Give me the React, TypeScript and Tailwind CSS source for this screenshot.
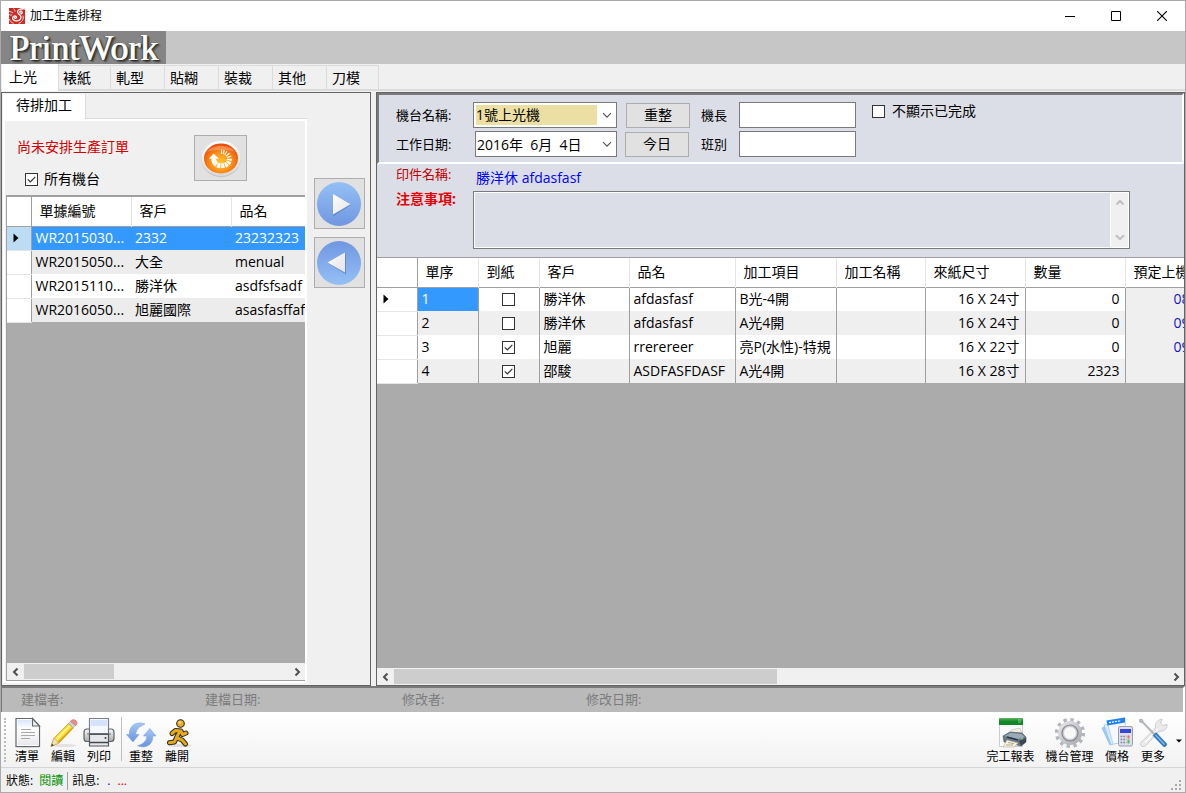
import React, { useState } from "react";

const TABS = ["上光", "裱紙", "軋型", "貼糊", "裝裁", "其他", "刀模"];

const PENDING = [
  ["WR2015030...", "2332", "23232323"],
  ["WR2015050...", "大全", "menual"],
  ["WR2015110...", "勝洋休", "asdfsfsadf"],
  ["WR2016050...", "旭麗國際", "asasfasffaf"],
];

const JOBS = [
  { no: "1", arrived: false, client: "勝洋休", name: "afdasfasf", item: "B光-4開", size: "16 X 24寸", qty: "0", due: "08" },
  { no: "2", arrived: false, client: "勝洋休", name: "afdasfasf", item: "A光4開", size: "16 X 24寸", qty: "0", due: "09" },
  { no: "3", arrived: true, client: "旭麗", name: "rrerereer", item: "亮P(水性)-特規", size: "16 X 22寸", qty: "0", due: "09" },
  { no: "4", arrived: true, client: "邵駿", name: "ASDFASFDASF", item: "A光4開", size: "16 X 28寸", qty: "2323", due: "" },
];

function CheckBox({ id, label, checked }: { id?: string; label?: string; checked: boolean }) {
  return (
    <span className="inline-grid size-[13px] shrink-0 place-items-center">
      <input
        id={id}
        aria-label={label}
        type="checkbox"
        defaultChecked={checked}
        className="peer col-start-1 row-start-1 size-[13px] appearance-none border border-[#333] bg-white"
      />
      <svg viewBox="0 0 13 13" className="pointer-events-none invisible col-start-1 row-start-1 size-[13px] peer-checked:visible">
        <path d="M2.8 6.4 5.3 9 10.3 3.8" fill="none" stroke="#333" strokeWidth="1.2" />
      </svg>
    </span>
  );
}

function Chevron({ dir, color = "#505050", bold = true }: { dir: "left" | "right" | "up" | "down"; color?: string; bold?: boolean }) {
  const paths = {
    left: "M7.5 2.5 4 6l3.5 3.5",
    right: "M4.5 2.5 8 6 4.5 9.5",
    up: "M2.5 7.5 6 4l3.5 3.5",
    down: "M2 4.2 6 8.2l4-4",
  };
  return (
    <svg viewBox="0 0 12 12" className="size-3 shrink-0">
      <path d={paths[dir]} fill="none" stroke={color} strokeWidth={bold ? 2 : 1.1} />
    </svg>
  );
}

function RowMarker() {
  return (
    <svg viewBox="0 0 6 10" className="ml-[6px] h-[10px] w-[6px]">
      <path d="M0.5 0.5v9L5.5 5z" fill="#000" />
    </svg>
  );
}

function HScroll({ thumb }: { thumb: string }) {
  return (
    <div className="flex h-[17px] shrink-0 items-stretch bg-[#f0f0f0]">
      <button aria-label="向左捲動" className="flex w-[17px] items-center justify-center"><Chevron dir="left" /></button>
      <div className="flex flex-1 py-px">
        <div className={"bg-[#cdcdcd] " + thumb} />
      </div>
      <button aria-label="向右捲動" className="flex w-[17px] items-center justify-center"><Chevron dir="right" /></button>
    </div>
  );
}

function AppIcon() {
  return (
    <svg viewBox="0 0 16 16" className="size-4">
      <rect width="16" height="16" fill="#cf2a22" />
      <path d="M15.500 .8C11 .5 8.200 1.800 8.600 4.200S12 6.500 12 9.200 9.500 13.200 6.500 12.800 3 10 4.300 8.700s3.300-.6 3 .8-1.700.8-1.700.2M11.200 4.800c-.8-1 .3-2.200 1.300-1.600s.8 2.300-.5 2.600" fill="none" stroke="#fff" strokeWidth="1.300" strokeLinecap="round" />
      <path d="M14 8c1 3-.5 6-4 7.200M0 3.500c2-.3 2.500 1.300 3.800 1.100M4.800 1c1.200.6 1.200 1.500 1.200 2.200M.5 6.800c1 .8 2 .5 2.600-.2M.5 11.500c.5 1.800 2 3.200 3.700 3.700" fill="none" stroke="#fff" strokeWidth=".8" strokeLinecap="round" />
    </svg>
  );
}

function OrangeRefresh() {
  return (
    <svg viewBox="0 0 42 40" className="h-10 w-[42px]">
      <defs>
        <radialGradient id="og" cx="50%" cy="62%" r="60%">
          <stop offset="0" stopColor="#ffc62c" />
          <stop offset=".5" stopColor="#ff931a" />
          <stop offset="1" stopColor="#e94c06" />
        </radialGradient>
        <linearGradient id="ring" x1="0" y1="0" x2="0" y2="1">
          <stop offset="0" stopColor="#fff" />
          <stop offset="1" stopColor="#d8d8d8" />
        </linearGradient>
      </defs>
      <ellipse cx="21" cy="21.500" rx="19.500" ry="17.500" fill="#c2c2c2" />
      <ellipse cx="21" cy="20.500" rx="19.500" ry="17.500" fill="url(#ring)" />
      <ellipse cx="21" cy="20.500" rx="17" ry="15" fill="url(#og)" />
      <path d="M7 14c4-8 24-8 28 0-7-3-21-3-28 0z" fill="#fff" opacity=".25" />
      <path d="M13.500 20.500c.5 5 3.500 7.300 8 7.300 5 0 8-3 8-7" fill="none" stroke="#fff" strokeWidth="5" strokeDasharray="7 .8 3.200 .8 3 .8 2.600 .8 2.400 .9" />
      <path d="M9 20.800 13.500 15.500l5.500 5.300z" fill="#fff" />
      <path d="M21.500 11.500v4.500M24.200 12l-1 4.200M27 13.200l-2.300 3.600M29.500 15.300l-3.500 2.800M31.300 18l-4.300 1.500" stroke="#fff" strokeWidth="1.100" />
    </svg>
  );
}

function BlueArrow({ flip }: { flip?: boolean }) {
  const id = flip ? "blueL" : "blueR";
  return (
    <svg viewBox="0 0 46 46" className="size-[46px]">
      <defs>
        <linearGradient id={id} x1="0" y1={flip ? "1" : "0"} x2="0" y2={flip ? "0" : "1"}>
          <stop offset="0" stopColor="#94c0f5" />
          <stop offset="1" stopColor="#7097e0" />
        </linearGradient>
        <linearGradient id={id + "w"} x1="0" y1="0" x2="1" y2="1">
          <stop offset="0" stopColor="#fff" />
          <stop offset="1" stopColor="#e2e2e4" />
        </linearGradient>
      </defs>
      <circle cx="23" cy="23" r="22" fill={"url(#" + id + ")"} />
      {flip ? (
        <>
          <path d="M30 13v21.500L12 23z" fill="#5575bd" opacity=".6" />
          <path d="M29 12.500v20L11.500 22.500z" fill={"url(#" + id + "w)"} />
        </>
      ) : (
        <>
          <path d="M17 14v21.500L35 24z" fill="#5575bd" opacity=".6" />
          <path d="M17 13v20.500L34.500 23.200z" fill={"url(#" + id + "w)"} />
        </>
      )}
    </svg>
  );
}

function DocIcon() {
  return (
    <svg viewBox="0 0 32 32" className="size-8">
      <defs>
        <linearGradient id="doc" x1="0" y1="0" x2="0" y2="1">
          <stop offset="0" stopColor="#d9e6fb" />
          <stop offset=".35" stopColor="#fff" />
          <stop offset="1" stopColor="#e9e9ec" />
        </linearGradient>
      </defs>
      <ellipse cx="16.500" cy="30" rx="13" ry="1.200" fill="#d4d4d4" />
      <path d="M5 1.500h16.500l7 7.500v20.500H5z" fill="#fff" stroke="#62666d" strokeWidth="1.200" />
      <path d="M6.500 3h14v7H27v18H6.500z" fill="url(#doc)" />
      <path d="M21.500 1.500V9h7z" fill="#eef0f4" stroke="#62666d" strokeWidth="1.100" />
      <path d="M10 12.500h10M10 15.500h14M10 18.500h14M10 21.500h9" stroke="#aaa" strokeWidth="1.100" />
    </svg>
  );
}

function PencilIcon() {
  return (
    <svg viewBox="0 0 32 32" className="size-8">
      <ellipse cx="17" cy="28.500" rx="12" ry="1.600" fill="#e2e2e2" />
      <path d="M4 29.500 6.700 21.500 21.500 6.500l4.800 4.300L12 26z" fill="#f8d42e" stroke="#c9a012" strokeWidth=".8" />
      <path d="m8.200 21.800 14-14 1.700 1.600-14 14.300z" fill="#fff27a" />
      <path d="m10.800 25 14-14 1 .8-14 14z" fill="#d99d12" />
      <path d="M4 29.500 6.700 21.500l2.700 1.300.6 1.900 2 1.300z" fill="#f3dfb5" stroke="#c9a860" strokeWidth=".6" />
      <path d="m4 29.500 1-3 1.900 1.900z" fill="#444" />
      <path d="M21.500 6.500 24 3.800l4.900 4.500-2.600 2.500z" fill="#d4d4d4" stroke="#999" strokeWidth=".6" />
      <path d="M23.500 4.300c1.500-1.800 3.600-2.300 5.300-.7s1.500 3.700-.2 5z" fill="#ee8a88" stroke="#c36464" strokeWidth=".6" />
    </svg>
  );
}

function PrinterIcon() {
  return (
    <svg viewBox="0 0 32 32" className="size-8">
      <defs>
        <linearGradient id="prn" x1="0" y1="0" x2="0" y2="1">
          <stop offset="0" stopColor="#fafafa" />
          <stop offset="1" stopColor="#a9abb0" />
        </linearGradient>
      </defs>
      <path d="M4 12h24c2 0 3 1.500 3 3.500v6c0 2-1 3-3 3H4c-2 0-3-1-3-3v-6C1 13.500 2 12 4 12z" fill="url(#prn)" stroke="#5d6066" strokeWidth="1.200" />
      <path d="M6.500 1.500h19v15h-19z" fill="#f5f8fe" stroke="#7c8087" strokeWidth="1.200" />
      <path d="M8 3h16v6H8z" fill="#d5e2fa" />
      <path d="M6.500 12v4.500h19V12M4 17h24" fill="none" stroke="#696c72" />
      <path d="M6.500 17.500h19V29h-19z" fill="#e7e8ea" stroke="#54575c" strokeWidth="1.200" />
      <path d="M7 25.500h18" stroke="#44474c" strokeWidth="1.500" />
      <circle cx="22.500" cy="21" r="1" fill="#444" />
    </svg>
  );
}

function SyncIcon() {
  return (
    <svg viewBox="0 0 32 32" className="size-8">
      <defs>
        <linearGradient id="sync" x1="0" y1="0" x2="0" y2="1">
          <stop offset="0" stopColor="#a4c8f5" />
          <stop offset="1" stopColor="#6a94de" />
        </linearGradient>
      </defs>
      <path d="M20 7C11 3.500 4 9 4.300 17.500H1.500L8 25l6-7.500h-3.200C11 12.500 14 9.500 20 7z" fill="url(#sync)" stroke="#7ca4df" strokeWidth=".6" />
      <path d="M12.500 28.800c9 3.500 15.700-1.500 15.200-9.800H31l-6.200-7.500L18.500 19h3.300c0 5-3.300 8-9.300 9.800z" fill="url(#sync)" stroke="#7ca4df" strokeWidth=".6" />
    </svg>
  );
}

function RunnerIcon() {
  return (
    <svg viewBox="0 0 32 32" className="size-8">
      <ellipse cx="19" cy="28.500" rx="12" ry="1.600" fill="#dedede" />
      <g strokeLinecap="round" strokeLinejoin="round" fill="none">
        <path d="m11 16.500 3.500-3 5.500.5 1.500 3.500 3.500-1.500M18.500 15l-3 5.500-2 4.500-5 .8M16 21l5 2 3.500 4" strokeWidth="5" stroke="#2d2a20" />
        <path d="m11 16.500 3.500-3 5.500.5 1.500 3.500 3.500-1.500M18.500 15l-3 5.500-2 4.500-5 .8M16 21l5 2 3.500 4" strokeWidth="3" stroke="#e6a81e" />
      </g>
      <circle cx="19.500" cy="6.500" r="3.800" fill="#edae27" stroke="#2d2a20" strokeWidth="1.100" />
      <circle cx="18.700" cy="5.500" r="1.300" fill="#ffe07c" />
    </svg>
  );
}

function ReportIcon() {
  return (
    <svg viewBox="0 0 32 32" className="size-8">
      <path d="M4.500 2h23v27.500h-23z" fill="#fafafa" stroke="#ccc" />
      <path d="M4 1.500h24v6.500H4z" fill="#12872a" />
      <path d="M4 1.500h24v2H4z" fill="#38a53f" />
      <path d="M23 3h3M23 5h3" stroke="#80d080" />
      <path d="m16 13 9-2 2 6-10 2z" fill="#f4efdf" stroke="#bbb" strokeWidth=".6" />
      <path d="m8 19 7-4 12 1 4 4v5l-5 4-17-4z" fill="#697887" stroke="#4b5662" strokeWidth=".6" />
      <path d="m9.500 19 6-3 11 1 3 3-6 2z" fill="#9cabb9" />
      <path d="m12 20 11 3" stroke="#334" strokeWidth="1.500" />
      <path d="m24 24 7-3v4l-5 4z" fill="#3c4651" />
      <path d="M26 21.500h2" stroke="#70cd60" strokeWidth="1.500" />
      <path d="m12 23 11 3-4 4H8z" fill="#f8f1dd" stroke="#b5b09c" strokeWidth=".6" />
      <path d="M11 28h7M13 25.500l6 1.200" stroke="#aa9" />
    </svg>
  );
}

function GearIcon() {
  return (
    <svg viewBox="0 0 32 32" className="size-8">
      <defs>
        <linearGradient id="gear" x1="0" y1="0" x2="1" y2="1">
          <stop offset="0" stopColor="#e4e4e8" />
          <stop offset="1" stopColor="#adaeb6" />
        </linearGradient>
      </defs>
      <circle cx="16" cy="16" r="13" fill="none" stroke="#b4b5bb" strokeWidth="4.200" strokeDasharray="3.200 3.607" />
      <circle cx="16" cy="16" r="9.200" fill="none" stroke="url(#gear)" strokeWidth="5.600" />
      <circle cx="16" cy="16" r="8" fill="none" stroke="#85868e" strokeWidth="1.200" />
      <circle cx="16" cy="16" r="6.500" fill="#f8f8f8" stroke="#c8c9ce" />
    </svg>
  );
}

function PriceIcon() {
  return (
    <svg viewBox="0 0 32 32" className="size-8">
      <path d="m1 11 10-4 5 18-7 3z" fill="#9fcdf5" stroke="#6daeeb" strokeWidth=".6" />
      <path d="m3 8 13-3 3 20-9 3z" fill="#d7eafc" stroke="#8ebdec" strokeWidth=".6" />
      <path d="m6 4 18-3 1 24-13 2z" fill="#f5f9ff" stroke="#9ebde8" strokeWidth=".6" />
      <path d="m5.500 3.500 18.500-3v5l-17.500 3z" fill="#2080ec" />
      <path d="m8 5.700 12-2" stroke="#fff" strokeWidth="1.200" strokeDasharray="2 1" />
      <rect x="17.500" y="9.500" width="14" height="19.500" rx="1.500" fill="#dedfea" stroke="#9a9db0" />
      <rect x="19" y="12" width="11" height="4" fill="#3445dc" />
      <path d="M19.500 19.500h6M19.500 22.500h6M19.500 25.500h6" stroke="#8588a0" strokeWidth="1.700" strokeDasharray="1.800 1" />
      <path d="M27.500 18.500v3" stroke="#ef6767" strokeWidth="2" />
      <path d="M27.500 22.500v4" stroke="#55bb65" strokeWidth="2" />
    </svg>
  );
}

function ToolsIcon() {
  return (
    <svg viewBox="0 0 32 32" className="size-8">
      <path d="M4 28.500c-2-2 0-3.500 2-5L18.500 11c-1-4 1.500-8 6.500-9l-1.500 4 2 2.500 4.500-1c.5 5-4 7.500-8 6.500L9 28.500c-2 1.500-3.500 1.500-5 0z" fill="#eaeaeb" stroke="#c0c1c3" strokeWidth=".8" />
      <path d="M8 25.500 21 12.500" stroke="#fff" strokeWidth="1.200" />
      <path d="M2.500 2.500 5 2l1.500 3 11 11.500-1 1L5.500 6 2.500 5z" fill="#b5b9bd" stroke="#999da2" strokeWidth=".5" />
      <path d="m16 18.500 3-3L29.500 26.500c1 1.500-1.500 4-3 3z" fill="#2d78be" stroke="#3a78b0" strokeWidth=".6" />
      <path d="m18.500 18 9 9.500" stroke="#80b9ea" strokeWidth="1.500" />
    </svg>
  );
}

function ToolButton({ label, icon, wide }: { label: string; icon: React.ReactNode; wide?: boolean }) {
  return (
    <button className={(wide ? "w-[59px]" : "w-9") + " flex flex-col items-center whitespace-nowrap text-[12px] leading-[15px]"}>
      {icon}
      {label}
    </button>
  );
}

function FormButton({ children }: { children: React.ReactNode }) {
  return <button className="h-[25px] w-16 border border-[#adadad] bg-[#e1e1e1] text-[14px] leading-5">{children}</button>;
}

function PendingPanel() {
  return (
    <section className="flex w-[370px] shrink-0 border border-[#646464] bg-[#f0f0f0] pt-px pb-[2px]">
      <div className="flex w-[305px] flex-col pl-px">
        <div className="flex h-[25px] shrink-0 items-stretch" role="tablist">
          <button role="tab" aria-selected="true" className="w-[83px] border-r border-[#dadada] bg-white pb-1 text-center text-[14px] leading-5">
            待排加工
          </button>
          <div className="flex-1 border-b border-[#dadada]" />
        </div>
        <div className="flex min-h-0 flex-1 flex-col border-2 border-white pl-px">
          <div className="flex h-[74px] shrink-0 justify-between pr-[58px] pl-[11px]">
            <div className="flex flex-col gap-3 pt-4">
              <h2 className="text-[14px] leading-5 text-[#d00000]">尚未安排生產訂單</h2>
              <label htmlFor="all" className="flex items-center gap-[6px] pl-[8px] text-[14px] leading-5">
                <CheckBox id="all" checked />
                所有機台
              </label>
            </div>
            <button aria-label="重新整理" className="mt-[14px] flex h-[46px] w-[53px] items-center justify-center border border-[#adadad] bg-[#e1e1e1]">
              <OrangeRefresh />
            </button>
          </div>
          <div className="flex min-h-0 flex-1 flex-col border-2 border-r-0 border-b border-l border-[#a0a0a0] bg-[#ababab]">
            <div className="min-h-0 flex-1 overflow-hidden">
              <table className="w-full table-fixed border-collapse text-[14px]">
                <colgroup>
                  <col className="w-6" />
                  <col className="w-[100px]" />
                  <col className="w-[100px]" />
                  <col />
                </colgroup>
                <thead>
                  <tr className="h-[29px] border-b border-[#a0a0a0] bg-white text-left">
                    <td className="border-r border-[#a0a0a0]" />
                    {["單據編號", "客戶", "品名"].map((h) => (
                      <th key={h} className="border-r border-[#e5e5e5] pb-[2px] pl-2 font-normal last:border-r-0">{h}</th>
                    ))}
                  </tr>
                </thead>
                <tbody>
                  {PENDING.map((row, i) => (
                    <tr key={row[0]} className={"h-6 " + (i === 0 ? "bg-[#3399ff] text-white" : i % 2 ? "bg-[#ececec]" : "bg-white")}>
                      <td className={"border-r border-b border-r-[#a0a0a0] border-b-[#e5e5e5] " + (i === 0 ? "bg-[#bcdcf4]" : "bg-white")}>
                        {i === 0 && <RowMarker />}
                      </td>
                      {row.map((c) => (
                        <td key={c} className="overflow-hidden pl-1 leading-5 whitespace-nowrap">{c}</td>
                      ))}
                    </tr>
                  ))}
                </tbody>
              </table>
            </div>
            <HScroll thumb="w-[34%]" />
          </div>
        </div>
      </div>
      <div className="flex flex-1 flex-col items-center gap-2 pt-[84px] pl-px">
        <button aria-label="加入排程" className="flex size-[51px] items-center justify-center border border-[#adadad] bg-[#e1e1e1]"><BlueArrow /></button>
        <button aria-label="移出排程" className="flex size-[51px] items-center justify-center border border-[#adadad] bg-[#e1e1e1]"><BlueArrow flip /></button>
      </div>
    </section>
  );
}

function JobForm() {
  return (
    <div className="shrink-0 bg-[#dcdee7]">
      <div className="grid h-[71px] grid-cols-[77px_144px_81px_auto_1fr] content-start items-center gap-y-[3px] border-2 border-t-[#7a7a7a] border-r-white border-b-white border-l-[#7a7a7a] pt-[7px] pl-[17px] text-[14px] leading-5">
        <label htmlFor="machine" className="text-[13px]">機台名稱:</label>
        <div className="flex h-[26px] items-center border border-[#7a7a7a] bg-white p-[2px] pr-[3px]">
          <select id="machine" className="h-full flex-1 appearance-none bg-[#ecdfa3] outline-none">
            <option>1號上光機</option>
          </select>
          <span className="pointer-events-none flex pl-[4px]"><Chevron dir="down" bold={false} /></span>
        </div>
        <div className="pl-[9px]"><FormButton>重整</FormButton></div>
        <div className="flex items-center">
          <label htmlFor="leader" className="w-[41px] pl-[3px] text-[13px]">機長</label>
          <input id="leader" className="h-[26px] w-[117px] border border-[#7a7a7a] bg-white px-1" />
        </div>
        <label htmlFor="hide" className="flex h-[26px] items-center gap-[7px] pb-[8px] pl-4">
          <CheckBox id="hide" checked={false} />
          不顯示已完成
        </label>
        <label htmlFor="date" className="text-[13px]">工作日期:</label>
        <div className="ml-[2px] flex h-[26px] items-center border border-[#7a7a7a] bg-white pr-[3px]">
          <input id="date" defaultValue={"2016年\u00a0 6月\u00a0 4日"} className="h-full min-w-0 flex-1 pl-px outline-none" />
          <Chevron dir="down" bold={false} />
        </div>
        <div className="pl-[8px]"><FormButton>今日</FormButton></div>
        <div className="flex items-center">
          <label htmlFor="shift" className="w-[41px] pl-[3px] text-[13px]">班別</label>
          <input id="shift" className="h-[26px] w-[117px] border border-[#7a7a7a] bg-white px-1" />
        </div>
      </div>
      <div className="grid h-[93px] grid-cols-[77px_1fr] content-start gap-y-[3px] pr-[54px] pl-[19px] leading-5">
        <span className="text-[13px] text-[#c00000]">印件名稱:</span>
        <span className="pt-1 pl-[3px] text-[14px] text-[#0000ff]">勝洋休 afdasfasf</span>
        <label htmlFor="notes" className="text-[14px] leading-4 font-bold text-[#e60000]">注意事項:</label>
        <div className="flex h-[58px] border border-[#7a7a7a] bg-white p-px">
          <textarea id="notes" className="flex-1 resize-none bg-[#dcdee7] outline-none" />
          <div className="ml-px flex w-[17px] flex-col items-center justify-between bg-[#f0f0f0] py-1">
            <Chevron dir="up" color="#bfbfbf" />
            <Chevron dir="down" color="#bfbfbf" />
          </div>
        </div>
      </div>
    </div>
  );
}

function JobTable() {
  const heads = ["單序", "到紙", "客戶", "品名", "加工項目", "加工名稱", "來紙尺寸", "數量", "預定上機"];
  const cell = "overflow-hidden border-r border-[#a0a0a0] pr-[5px] pl-1 leading-5 whitespace-nowrap";
  return (
    <div className="flex min-h-0 flex-1 flex-col border-t border-[#a0a0a0] bg-[#ababab]">
      <div className="min-h-0 flex-1 overflow-hidden">
        <table className="w-[868px] table-fixed border-collapse text-[14px]">
          <colgroup>
            <col className="w-10" />
            <col className="w-[61px]" />
            <col className="w-[61px]" />
            <col className="w-[90px]" />
            <col className="w-[106px]" />
            <col className="w-[101px]" />
            <col className="w-[89px]" />
            <col className="w-[100px]" />
            <col className="w-[100px]" />
            <col />
          </colgroup>
          <thead>
            <tr className="h-[29px] border-b border-[#a0a0a0] bg-white text-left">
              <td className="border-r border-[#a0a0a0]" />
              {heads.map((h) => (
                <th key={h} className="border-r border-[#e5e5e5] pb-[2px] pl-2 font-normal whitespace-nowrap">{h}</th>
              ))}
            </tr>
          </thead>
          <tbody>
            {JOBS.map((j, i) => (
              <tr key={j.no} className={"h-6 " + (i % 2 ? "bg-[#efefef]" : "bg-white")}>
                <td className="border-r border-b border-r-[#a0a0a0] border-b-[#e5e5e5] bg-white">{i === 0 && <RowMarker />}</td>
                <td className={cell + (i === 0 ? " bg-[#3399ff] text-white" : "")}>{j.no}</td>
                <td className={cell}>
                  <span className="flex justify-center"><CheckBox label={"到紙 " + j.no} checked={j.arrived} /></span>
                </td>
                <td className={cell}>{j.client}</td>
                <td className={cell}>{j.name}</td>
                <td className={cell}>{j.item}</td>
                <td className={cell} />
                <td className={cell + " text-right"}>{j.size}</td>
                <td className={cell + " text-right"}>{j.qty}</td>
                <td className="bg-[#efefef] pl-12 leading-5 text-[#1414c8]">{j.due}</td>
              </tr>
            ))}
          </tbody>
        </table>
      </div>
      <HScroll thumb="w-[49.500%]" />
    </div>
  );
}

export default function App() {
  const [tab, setTab] = useState(0);
  return (
    <div className="flex h-screen min-h-[600px] w-full flex-col overflow-hidden border border-[#aaaaaa] bg-[#f0f0f0] font-['Open_Sans','Noto_Sans_CJK_TC',sans-serif] text-black">
      <header className="flex h-[30px] shrink-0 items-center bg-white pl-2">
        <AppIcon />
        <h1 className="flex-1 pl-[5px] text-[12px] leading-5">加工生產排程</h1>
        <button aria-label="最小化" className="flex w-[46px] justify-center">
          <svg viewBox="0 0 10 10" className="size-[10px]"><path d="M0 5.500h10" stroke="#000" /></svg>
        </button>
        <button aria-label="最大化" className="flex w-[46px] justify-center">
          <svg viewBox="0 0 10 10" className="size-[10px]"><path d="M.5.5h9v9h-9z" fill="none" stroke="#000" /></svg>
        </button>
        <button aria-label="關閉" className="flex w-[46px] justify-center">
          <svg viewBox="0 0 10 10" className="size-[10px]"><path d="m0 0 10 10M10 0 0 10" stroke="#000" strokeWidth="1.100" /></svg>
        </button>
      </header>

      <div className="flex h-[33px] shrink-0 bg-[#c6c6c6]">
        <div className="flex w-[165px] items-center justify-center bg-[#858585] font-['Liberation_Serif',serif] text-[36px] leading-8 text-white [text-shadow:1px_0_0_#e8e8e8,2px_1px_1px_#2c2e28,3px_2px_2px_#3c3e38,-1px_0_1px_#50524a]">
          PrintWork
        </div>
      </div>

      <nav role="tablist" className="flex h-[27px] shrink-0 items-end border-b-2 border-[#dcdcdc] pl-px">
        {TABS.map((t, i) => (
          <button
            key={t}
            role="tab"
            aria-selected={tab === i}
            onClick={() => setTab(i)}
            className={
              tab === i
                ? "-mb-[2px] h-[27px] w-[57px] border-r border-[#dcdcdc] bg-white pb-[2px] pl-[7px] text-left text-[14px] leading-5"
                : "h-6 w-[54px] border-t border-r border-[#dcdcdc] pl-[5px] text-left text-[14px] leading-5 first:w-[57px] nth-2:w-[52px] nth-2:pl-1 last:w-[52px]"
            }
          >
            {t}
          </button>
        ))}
      </nav>

      <main className="flex min-h-0 flex-1 gap-[5px] pt-px">
        <PendingPanel />
        <section className="flex min-w-0 flex-1 flex-col border border-[#646464]">
          <JobForm />
          <JobTable />
        </section>
      </main>

      <div className="grid h-[26px] shrink-0 grid-cols-[184px_197px_184px_1fr] items-center border-t-2 border-r-2 border-l border-t-[#7a7a7a] border-r-white border-l-[#7a7a7a] bg-[#bababa] pb-[2px] pl-[19px] text-[13px] leading-5 text-[#7c7c7c]">
        <span>建檔者:</span>
        <span>建檔日期:</span>
        <span>修改者:</span>
        <span>修改日期:</span>
      </div>

      <div className="flex h-14 shrink-0 items-start border-b border-[#d5d5d5] bg-linear-to-b from-white to-[#f2f2f2] pt-[5px] pr-[3px]">
        <div className="mt-px ml-[3px] h-11 border-l-2 border-dotted border-[#bcbcbc]" />
        <div className="flex pl-[3px]">
          <ToolButton label="清單" icon={<DocIcon />} />
          <ToolButton label="編輯" icon={<PencilIcon />} />
          <ToolButton label="列印" icon={<PrinterIcon />} />
        </div>
        <div className="mr-px ml-1 h-11 w-px bg-[#c0c0c0]" />
        <div className="flex flex-1">
          <ToolButton label="重整" icon={<SyncIcon />} />
          <ToolButton label="離開" icon={<RunnerIcon />} />
        </div>
        <ToolButton wide label="完工報表" icon={<ReportIcon />} />
        <ToolButton wide label="機台管理" icon={<GearIcon />} />
        <ToolButton label="價格" icon={<PriceIcon />} />
        <ToolButton label="更多" icon={<ToolsIcon />} />
        <button aria-label="更多選項" className="flex h-12 w-[11px] items-center justify-end">
          <svg viewBox="0 0 6 4" className="h-1 w-[6px]"><path d="M0 .5h6l-3 3z" fill="#000" /></svg>
        </button>
      </div>

      <footer className="flex h-6 shrink-0 items-center pt-px pl-[5px] text-[12px] leading-5">
        <span>狀態:</span>
        <span className="pl-[6px] text-[#009000]">閱讀</span>
        <span className="mx-1 h-[18px] w-px bg-[#a0a0a0]" />
        <span>訊息:</span>
        <span className="pl-[8px] text-[#0000c0]">.</span>
        <span className="flex-1 pl-[7px] text-[#e00000]">...</span>
        <svg viewBox="0 0 12 12" className="mr-[2px] size-3 self-end">
          <path d="M8 0h2v2H8zM4 4h2v2H4zM8 4h2v2H8zM0 8h2v2H0zM4 8h2v2H4zM8 8h2v2H8z" fill="#aaa" />
        </svg>
      </footer>
    </div>
  );
}
